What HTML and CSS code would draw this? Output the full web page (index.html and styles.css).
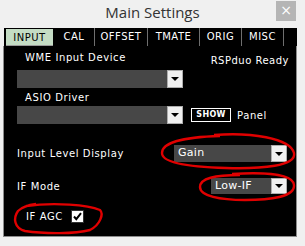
FILE: index.html
```html
<!DOCTYPE html>
<html lang="en">
<head>
    <meta charset="UTF-8">
    <title>Main Settings</title>
    <link rel="stylesheet" href="styles.css">
</head>
<body>
    <!-- Title bar -->
    <div class="titlebar">
        <div class="title">Main Settings</div>
        <div class="close">&times;</div>
    </div>

    <!-- Tabs -->
    <div class="tabs">
        <div class="tab active">INPUT</div>
        <div class="tab tab-cal">CAL</div>
        <div class="tab tab-offset">OFFSET</div>
        <div class="tab tab-tmate">TMATE</div>
        <div class="tab tab-orig">ORIG</div>
        <div class="tab tab-misc">MISC</div>
    </div>

    <!-- Panel -->
    <div class="panel">
        <div class="row row-top">
            <div class="label label-wme">WME Input Device</div>
            <div class="status">RSPduo Ready</div>
        </div>
        <div class="row row-combo">
            <div class="combo combo-wide">
                <div class="combo-text"></div>
                <div class="combo-btn"><span class="arrow"></span></div>
            </div>
        </div>
        <div class="row row-label">
            <div class="label label-wme">ASIO Driver</div>
        </div>
        <div class="row row-combo">
            <div class="combo combo-wide">
                <div class="combo-text"></div>
                <div class="combo-btn"><span class="arrow"></span></div>
            </div>
            <div class="show-btn">SHOW</div>
            <div class="label">Panel</div>
        </div>
        <div class="row row-level">
            <div class="label">Input Level Display</div>
            <div class="combo combo-gain">
                <div class="combo-text">Gain</div>
                <div class="combo-btn"><span class="arrow"></span></div>
            </div>
        </div>
        <div class="row row-mode">
            <div class="label">IF Mode</div>
            <div class="combo combo-mode">
                <div class="combo-text">Low-IF</div>
                <div class="combo-btn"><span class="arrow"></span></div>
            </div>
        </div>
        <div class="row row-agc">
            <div class="label">IF AGC</div>
            <div class="checkbox">
                <svg width="11" height="11" viewBox="0 0 11 11">
                    <path d="M2 5.5 L4.3 8.2 L9 2.2" fill="none" stroke="#000" stroke-width="2"/>
                </svg>
            </div>
        </div>
    </div>

    <!-- Red hand drawn marks on top of the screenshot -->
    <svg class="marks" width="305" height="246" viewBox="0 0 305 246">
        <path d="M214 135 C250 132 290 138 294 153 C297 166 262 169 226 168 C190 167 162 163 162 153 C162 143 182 137 220 136"
              fill="none" stroke="#e00000" stroke-width="2.4"/>
        <path d="M232 174 C265 172 293 174 294 185 C295 197 270 200 245 200 C220 200 200 196 200 187 C200 178 215 175 240 175"
              fill="none" stroke="#e00000" stroke-width="2.4"/>
        <path d="M26 206 C55 202 88 205 100 210 C104 214 100 225 90 230 C75 234 45 234 25 231 C14 228 13 218 18 211 C22 207 28 205 36 204"
              fill="none" stroke="#e00000" stroke-width="2.4"/>
    </svg>
</body>
</html>
```

FILE: styles.css
```css
body {
    margin: 0;
    width: 305px;
    height: 246px;
    background: #f0f0f0;
    font-family: "DejaVu Sans", Verdana, sans-serif;
    position: relative;
    overflow: hidden;
}
.titlebar {
    height: 26px;
    display: flex;
    justify-content: center;
    align-items: center;
    position: relative;
}
.title {
    font-family: "Open Sans", sans-serif;
    font-size: 15px;
    color: #333;
    margin-top: -2px;
}
.close {
    position: absolute;
    right: 9px;
    top: 1px;
    width: 20px;
    height: 20px;
    background: #b5b5b5;
    color: #fff;
    font-size: 14px;
    line-height: 19px;
    text-align: center;
}
.tabs {
    margin: 2px 0 0 4px;
    width: 293px;
    height: 18px;
    background: #000;
    display: flex;
    box-sizing: border-box;
    padding-left: 2px;
}
.tab {
    height: 18px;
    line-height: 18px;
    font-size: 10px;
    color: #fff;
    text-align: center;
    border-right: 1px solid #6f6f6f;
    box-sizing: border-box;
    letter-spacing: 0.5px;
}
.tab.active {
    width: 47px;
    margin-top: 1px;
    height: 17px;
    line-height: 17px;
    background: #c4dcc4;
    color: #000;
    border-right: none;
    border-bottom: 1px solid #999;
    margin-right: 1px;
}
.tab-cal { width: 41px; }
.tab-offset { width: 53px; }
.tab-tmate { width: 52px; }
.tab-orig { width: 42px; }
.tab-misc { width: 42px; }
.panel {
    margin-left: 3px;
    width: 294px;
    height: 191px;
    background: #000;
    border: 1px solid #8c8c8c;
    border-top: none;
    box-sizing: border-box;
}
.row {
    display: flex;
    align-items: center;
}
.label {
    font-size: 10px;
    color: #fff;
    white-space: nowrap;
    letter-spacing: 0.6px;
}
.row-top {
    height: 24px;
    align-items: flex-start;
    justify-content: space-between;
}
.label-wme {
    margin-left: 21px;
}
.row-top .label-wme {
    margin-top: 6px;
}
.status {
    font-size: 10px;
    color: #fff;
    margin-top: 9px;
    margin-right: 7px;
    letter-spacing: 0.5px;
}
.row-combo {
    height: 18px;
}
.row-label {
    height: 18px;
}
.combo {
    display: flex;
    height: 18px;
    background: #474747;
    box-sizing: border-box;
}
.combo-wide {
    margin-left: 13px;
    width: 166px;
}
.combo-text {
    flex: 1;
    color: #fff;
    font-size: 11px;
    line-height: 17px;
    padding-left: 4px;
    letter-spacing: 0.3px;
}
.combo-btn {
    width: 16px;
    background: #f0f0f0;
    border: 1px solid #adadad;
    box-sizing: border-box;
    display: flex;
    justify-content: center;
    align-items: center;
}
.arrow {
    width: 0;
    height: 0;
    border-left: 4px solid transparent;
    border-right: 4px solid transparent;
    border-top: 4px solid #000;
}
.show-btn {
    margin-left: 8px;
    width: 40px;
    height: 14px;
    border: 1px solid #fff;
    box-sizing: border-box;
    color: #fff;
    font-size: 8px;
    font-weight: bold;
    text-align: center;
    line-height: 12px;
    letter-spacing: 0.3px;
}
.row-combo .label {
    margin-left: 6px;
}
.row-level {
    margin-top: 21px;
    height: 17px;
    justify-content: space-between;
}
.row-level .label,
.row-mode .label {
    margin-left: 13px;
}
.combo-gain {
    width: 113px;
    height: 17px;
    margin-right: 9px;
}
.row-mode {
    margin-top: 16px;
    height: 16px;
    justify-content: space-between;
}
.combo-mode {
    width: 76px;
    height: 16px;
    margin-right: 9px;
}
.combo-mode .combo-text,
.combo-gain .combo-text {
    line-height: 16px;
}
.row-agc {
    margin-top: 16px;
    height: 13px;
}
.row-agc .label {
    margin-left: 22px;
}
.checkbox {
    margin-left: 8px;
    width: 13px;
    height: 13px;
    background: #fff;
    border: 1px solid #333;
    box-sizing: border-box;
    display: flex;
    justify-content: center;
    align-items: center;
}
.marks {
    position: absolute;
    top: 0;
    left: 0;
    pointer-events: none;
}
```
